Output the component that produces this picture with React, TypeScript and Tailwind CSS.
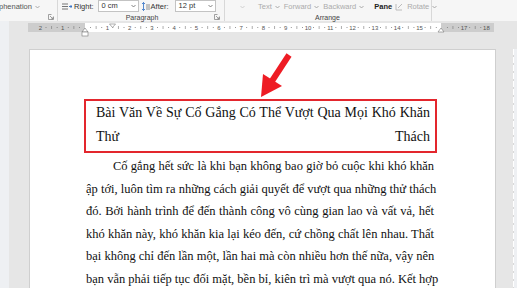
import React from "react";

const Launcher = () => (
    <svg width="6" height="6" viewBox="0 0 6 6" className="shrink-0">
        <path d="M0.5 0.5h3M0.5 0.5v5h5v-3" stroke="#8a8a8a" strokeWidth="0.8" fill="none" />
        <path d="M2 2l3 3M5 3v2h-2" stroke="#8a8a8a" strokeWidth="0.8" fill="none" />
    </svg>
);

const Caret = ({ color = "#9a9a9a" }: { color?: string }) => (
    <svg width="5" height="4" viewBox="0 0 5 4" className="shrink-0">
        <path d="M0.5 1l2 2 2-2" stroke={color} strokeWidth="0.8" fill="none" />
    </svg>
);

const SpinBox = ({ value }: { value: string }) => (
    <div className="w-[41px] h-[12px] -mt-[1px] bg-white border border-[#c3c3c3] flex items-center justify-between pl-[3px] pr-[2px] text-[7.5px] text-[#333]">
        <span>{value}</span>
        <Caret color="#666" />
    </div>
);

const Ribbon = () => (
    <div className="h-[21px] bg-[#f6f6f6] flex text-[7.5px] leading-none shrink-0">
        <div className="w-[58px] flex flex-col border-r border-[#d8d8d8] overflow-hidden">
            <div className="h-[13px] flex items-center gap-[3px] -ml-[1px] text-[#555]">
                <span>phenation</span>
                <Caret />
            </div>
            <div className="flex-1 flex items-center justify-end pr-[3px]">
                <Launcher />
            </div>
        </div>
        <div className="w-[167px] flex flex-col border-r border-[#d8d8d8]">
            <div className="h-[13px] flex items-center pl-[4px]">
                <svg width="10" height="7" viewBox="0 0 10 7" className="shrink-0">
                    <path d="M0 1h6M0 3.5h6M0 6h6" stroke="#666" strokeWidth="0.9" />
                    <path d="M7 3.5h3M8.5 2l1.5 1.5-1.5 1.5" stroke="#2b6cc4" strokeWidth="0.9" fill="none" />
                </svg>
                <span className="ml-[2px] text-[#333]">Right:</span>
                <div className="ml-[4px]">
                    <SpinBox value="0 cm" />
                </div>
                <svg width="8" height="9" viewBox="0 0 8 9" className="ml-[3px] shrink-0">
                    <path d="M1.5 0.5v8M0 2l1.5-1.5 1.5 1.5M0 7l1.5 1.5 1.5-1.5" stroke="#2b6cc4" strokeWidth="0.8" fill="none" />
                    <path d="M4 3h4M4 5h4M4 7h4" stroke="#777" strokeWidth="0.8" />
                </svg>
                <span className="ml-[1px] text-[#333]">After:</span>
                <div className="ml-[6px]">
                    <SpinBox value="12 pt" />
                </div>
            </div>
            <div className="flex-1 flex items-center">
                <span className="flex-1 text-center text-[7px] text-[#444] pl-[12px]">Paragraph</span>
                <div className="pr-[4px]">
                    <Launcher />
                </div>
            </div>
        </div>
        <div className="w-[207px] flex flex-col border-r border-[#d8d8d8]">
            <div className="h-[13px] flex items-center text-[#ababab]">
                <div className="ml-[15px]">
                    <Caret color="#c8c8c8" />
                </div>
                <span className="ml-[13px]">Text</span>
                <div className="ml-[3px]">
                    <Caret />
                </div>
                <span className="ml-[4px]">Forward</span>
                <div className="ml-[3px]">
                    <Caret />
                </div>
                <span className="ml-[4px]">Backward</span>
                <div className="ml-[3px]">
                    <Caret />
                </div>
                <span className="ml-[10px] text-[#222] font-semibold">Pane</span>
                <svg width="10" height="8" viewBox="0 0 10 8" className="ml-[3px] shrink-0">
                    <path d="M1 7V1M1 7h6" stroke="#b5b5b5" strokeWidth="0.9" fill="none" />
                    <path d="M3 5l4-4" stroke="#b5b5b5" strokeWidth="0.9" />
                </svg>
                <span className="ml-[2px]">Rotate</span>
                <div className="ml-[3px]">
                    <Caret />
                </div>
            </div>
            <div className="flex-1 flex items-center">
                <span className="ml-[90px] text-[7px] text-[#444]">Arrange</span>
            </div>
        </div>
        <div className="flex-1" />
    </div>
);

const Ruler = () => {
    const zero = 57;
    const cm = 22.3;
    const items: React.ReactNode[] = [];
    for (let n = -2; n <= 18; n++) {
        const x = zero + n * cm;
        if (n !== 0 && n !== 16) {
            items.push(
                <text key={"n" + n} x={x} y={6.5} fontSize="6" textAnchor="middle" fill="#555" fontFamily="Liberation Sans, Arial, sans-serif">
                    {Math.abs(n)}
                </text>
            );
        }
        if (n < 18) {
            items.push(<circle key={"a" + n} cx={x + cm * 0.25} cy={4.5} r={0.5} fill="#777" />);
            items.push(<line key={"b" + n} x1={x + cm * 0.5} x2={x + cm * 0.5} y1={3} y2={6} stroke="#777" strokeWidth={0.6} />);
            items.push(<circle key={"c" + n} cx={x + cm * 0.75} cy={4.5} r={0.5} fill="#777" />);
        }
    }
    return (
        <div className="ml-[19px] h-[10px] shrink-0">
            <svg width="466" height="15" viewBox="0 0 466 15" className="overflow-visible">
                <rect x="0" y="0" width="57" height="9" fill="#cdcdcd" />
                <rect x="57" y="0" width="356" height="9" fill="#ffffff" />
                <rect x="413" y="0" width="53" height="9" fill="#cdcdcd" />
                {items}
                <path d="M81.5 1h6l-3 3.5z" fill="#fff" stroke="#777" strokeWidth="0.6" />
                <path d="M54 9l3-4 3 4z" fill="#fff" stroke="#777" strokeWidth="0.6" />
                <rect x="54" y="9" width="6" height="4" fill="#fff" stroke="#777" strokeWidth="0.6" />
                <path d="M410 9l3-4 3 4z" fill="#fff" stroke="#777" strokeWidth="0.6" />
            </svg>
        </div>
    );
};

const bodyLines = [
    "Cố gắng hết sức là khi bạn không bao giờ bỏ cuộc khi khó khăn",
    "ập tới, luôn tìm ra những cách giải quyết để vượt qua những thử thách",
    "đó. Bởi hành trình để đến thành công vô cùng gian lao và vất vả, hết",
    "khó khăn này, khó khăn kia lại kéo đến, cứ chồng chất lên nhau. Thất",
    "bại không chỉ đến lần một, lần hai mà còn nhiều hơn thế nữa, vậy nên",
    "bạn vẫn phải tiếp tục đối mặt, bền bỉ, kiên trì mà vượt qua nó. Kết hợp",
];

const Page = () => (
    <div className="w-[467px] bg-white border-l border-t border-r border-[#cfcfcf] pt-[49px] pl-[56px] pr-[61px] font-['Liberation_Serif','Times_New_Roman',serif] text-[#111]">
        <div className="-ml-[2px] -mr-[3px] border-2 border-[#e3262d] pl-[10px] pr-[5px] pb-[2px] text-[14px] leading-[24px]">
            <div className="text-justify [text-align-last:justify] whitespace-nowrap">Bài Văn Về Sự Cố Gắng Có Thể Vượt Qua Mọi Khó Khăn</div>
            <div className="flex justify-between">
                <span>Thử</span>
                <span>Thách</span>
            </div>
        </div>
        <div className="mt-[2px] text-[12.5px] leading-[22.5px]">
            {bodyLines.map((line, i) => (
                <div key={i} className={"text-justify [text-align-last:justify] whitespace-nowrap " + (i === 0 ? "pl-[27px]" : "")}>
                    {line}
                </div>
            ))}
        </div>
    </div>
);

export default function App() {
    return (
        <div className="relative w-[517px] h-[288px] overflow-hidden bg-[#e6e6e6] flex flex-col font-['Liberation_Sans',Arial,sans-serif]">
            <Ribbon />
            <div className="flex flex-1 min-h-0">
                <div className="w-[9px] bg-[#eef0f3] shrink-0" />
                <div className="flex-1 flex flex-col min-w-0">
                    <div className="h-[2px] shrink-0" />
                    <Ruler />
                    <div className="flex flex-1 min-h-0 mt-[16px]">
                        <div className="w-[20px] shrink-0" />
                        <Page />
                        <div className="w-[17px] shrink-0" />
                        <div className="w-[1px] shrink-0 bg-[repeating-linear-gradient(to_bottom,#ffffff_0px,#ffffff_6px,#d9d9d9_6px,#d9d9d9_8px)]" />
                        <div className="flex-1 bg-[#eef0f3]" />
                    </div>
                </div>
            </div>
            <svg width="517" height="288" viewBox="0 0 517 288" className="absolute left-0 top-0 pointer-events-none">
                <path d="M289 55L272 81" stroke="#ee1c24" strokeWidth="6" strokeLinecap="butt" />
                <path d="M261 97L263 74L282 86Z" fill="#ee1c24" />
            </svg>
        </div>
    );
}
